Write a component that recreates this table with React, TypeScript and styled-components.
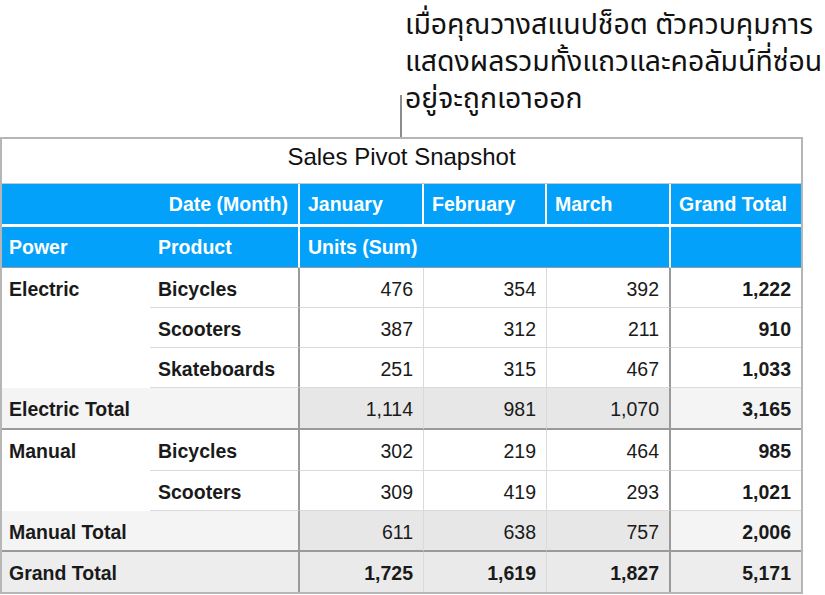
import React from "react";
import styled, { createGlobalStyle } from "styled-components";

const GlobalStyle = createGlobalStyle`
  html, body { margin: 0; padding: 0; background: #ffffff; }
  body { font-family: "Liberation Sans", Arial, sans-serif; color: #1c1c1c; }
`;

const BLUE = "#03a1fa";
const DARK_LINE = "#9a9a9a";
const LIGHT_LINE = "#dadada";

const Page = styled.div`
  width: 825px;
  height: 595px;
  display: flex;
  flex-direction: column;
  overflow: hidden;
`;

const Callout = styled.div`
  position: relative;
  height: 137px;
  flex: none;
`;

const CalloutText = styled.div`
  padding-left: 405px;
  padding-top: 7px;
  font-family: "Noto Sans Thai", "Noto Sans Thai UI", "Noto Sans", "DejaVu Sans", sans-serif;
  font-size: 28.4px;
  line-height: 37px;
  color: #111;
`;

const CalloutLine = styled.span`
  display: block;
  white-space: nowrap;
`;

const Leader = styled.div`
  position: absolute;
  left: 400px;
  top: 95px;
  width: 2px;
  height: 42px;
  background: #8c8c8c;
`;

const Table = styled.div`
  width: 803px;
  box-sizing: border-box;
  border: 2px solid #b6b6b6;
  display: grid;
  grid-template-columns: 148px 150px 124px 123px 124px 130px;
  grid-template-rows: 45px 43px 41px repeat(3, 40px) 42px 41px 40px 41px 40px;
  font-size: 19.5px;
`;

const Title = styled.div`
  grid-column: 1 / span 6;
  display: flex;
  align-items: center;
  justify-content: center;
  padding-bottom: 8px;
  font-size: 24px;
  color: #111;
  border-bottom: 1px solid #c8c8c8;
`;

type HeadProps = {
  $span?: number;
  $right?: boolean;
  $divider?: boolean;
  $gap?: boolean;
  $first?: boolean;
};

const HeadCell = styled.div<HeadProps>`
  grid-column: span ${(p) => p.$span ?? 1};
  box-sizing: border-box;
  background: ${BLUE};
  color: #ffffff;
  font-weight: 700;
  display: flex;
  align-items: center;
  justify-content: ${(p) => (p.$right ? "flex-end" : "flex-start")};
  padding: 0 10px 0 ${(p) => (p.$first ? 7 : 8)}px;
  border-right: ${(p) => (p.$divider ? "2px solid #ffffff" : "none")};
  border-bottom: ${(p) => (p.$gap ? "3px solid #ffffff" : `1px solid ${DARK_LINE}`)};
  white-space: nowrap;
`;

type Tone = "plain" | "sub" | "subMonth" | "grand" | "grandMonth";

const toneBg: Record<Tone, string> = {
  plain: "#ffffff",
  sub: "#f4f4f4",
  subMonth: "#e7e7e7",
  grand: "#ededed",
  grandMonth: "#eaeaea",
};

type Line = "none" | "light" | "dark";

type CellProps = {
  $tone?: Tone;
  $bold?: boolean;
  $right?: boolean;
  $bottom?: Line;
  $edge?: Line;
  $rows?: number;
  $first?: boolean;
  $spill?: boolean;
};

const lineFor = (v?: Line) =>
  v === "dark" ? `2px solid ${DARK_LINE}` : v === "light" ? `1px solid ${LIGHT_LINE}` : "none";

const Cell = styled.div<CellProps>`
  grid-row: span ${(p) => p.$rows ?? 1};
  box-sizing: border-box;
  background: ${(p) => toneBg[p.$tone ?? "plain"]};
  font-weight: ${(p) => (p.$bold ? 700 : 400)};
  text-align: ${(p) => (p.$right ? "right" : "left")};
  line-height: 42px;
  padding: 0 10px 0 ${(p) => (p.$first ? 7 : 8)}px;
  border-bottom: ${(p) => lineFor(p.$bottom)};
  border-right: ${(p) => lineFor(p.$edge)};
  white-space: nowrap;
  overflow: ${(p) => (p.$spill ? "visible" : "hidden")};
  color: #1a1a1a;
`;

type DataRow = {
  power?: string;
  powerRows?: number;
  product: string;
  values: string[];
  total: string;
};

const electric: DataRow[] = [
  { power: "Electric", powerRows: 3, product: "Bicycles", values: ["476", "354", "392"], total: "1,222" },
  { product: "Scooters", values: ["387", "312", "211"], total: "910" },
  { product: "Skateboards", values: ["251", "315", "467"], total: "1,033" },
];

const manual: DataRow[] = [
  { power: "Manual", powerRows: 2, product: "Bicycles", values: ["302", "219", "464"], total: "985" },
  { product: "Scooters", values: ["309", "419", "293"], total: "1,021" },
];

type TotalRow = {
  label: string;
  values: string[];
  total: string;
  kind: "sub" | "grand";
};

const renderGroup = (rows: DataRow[]) =>
  rows.map((r, i) => (
    <React.Fragment key={r.product + i}>
      {r.power && (
        <Cell $first $bold $rows={r.powerRows}>
          {r.power}
        </Cell>
      )}
      <Cell $bold $bottom="light" $edge="dark">
        {r.product}
      </Cell>
      {r.values.map((v, j) => (
        <Cell key={j} $right $bottom="light" $edge={j === 2 ? "dark" : "light"}>
          {v}
        </Cell>
      ))}
      <Cell $right $bold $bottom="light">
        {r.total}
      </Cell>
    </React.Fragment>
  ));

const renderTotal = (t: TotalRow) => {
  const isGrand = t.kind === "grand";
  const labelTone: Tone = isGrand ? "grand" : "sub";
  const monthTone: Tone = isGrand ? "grandMonth" : "subMonth";
  const bottom: Line = isGrand ? "none" : "dark";
  return (
    <React.Fragment key={t.label}>
      <Cell $first $spill $bold $tone={labelTone} $bottom={bottom}>
        {t.label}
      </Cell>
      <Cell $tone={labelTone} $bottom={bottom} $edge="dark" />
      {t.values.map((v, j) => (
        <Cell key={j} $right $bold={isGrand} $tone={monthTone} $bottom={bottom} $edge={j === 2 ? "dark" : "light"}>
          {v}
        </Cell>
      ))}
      <Cell $right $bold $tone={labelTone} $bottom={bottom}>
        {t.total}
      </Cell>
    </React.Fragment>
  );
};

export default function App() {
  return (
    <Page>
      <GlobalStyle />
      <Callout>
        <CalloutText>
          <CalloutLine>เมื่อคุณวางสแนปช็อต ตัวควบคุมการ</CalloutLine>
          <CalloutLine>แสดงผลรวมทั้งแถวและคอลัมน์ที่ซ่อน</CalloutLine>
          <CalloutLine>อยู่จะถูกเอาออก</CalloutLine>
        </CalloutText>
        <Leader />
      </Callout>
      <Table>
        <Title>Sales Pivot Snapshot</Title>

        <HeadCell $first $span={2} $right $divider $gap>
          Date (Month)
        </HeadCell>
        <HeadCell $divider $gap>January</HeadCell>
        <HeadCell $divider $gap>February</HeadCell>
        <HeadCell $divider $gap>March</HeadCell>
        <HeadCell $gap>Grand Total</HeadCell>

        <HeadCell $first>Power</HeadCell>
        <HeadCell $divider>Product</HeadCell>
        <HeadCell $span={3} $divider>
          Units (Sum)
        </HeadCell>
        <HeadCell />

        {renderGroup(electric)}
        {renderTotal({ label: "Electric Total", values: ["1,114", "981", "1,070"], total: "3,165", kind: "sub" })}
        {renderGroup(manual)}
        {renderTotal({ label: "Manual Total", values: ["611", "638", "757"], total: "2,006", kind: "sub" })}
        {renderTotal({ label: "Grand Total", values: ["1,725", "1,619", "1,827"], total: "5,171", kind: "grand" })}
      </Table>
    </Page>
  );
}
